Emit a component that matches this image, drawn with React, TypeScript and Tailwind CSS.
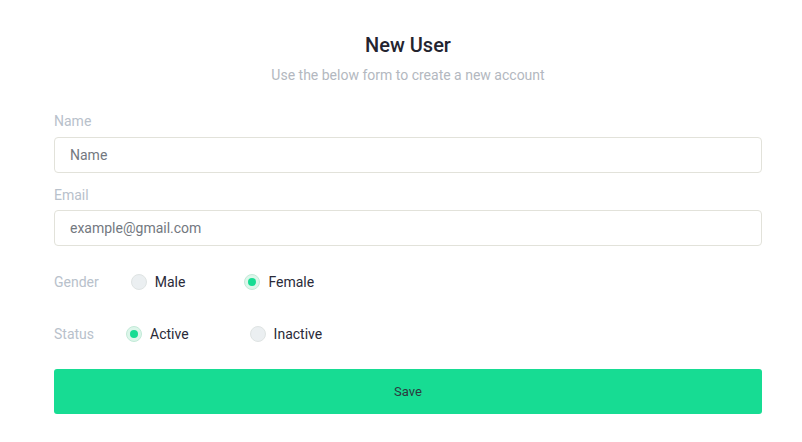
import React from "react";

function Radio({ checked, label }: { checked: boolean; label: string }) {
  return (
    <div className="flex items-center gap-[8px]">
      {checked ? (
        <span className="flex h-[16px] w-[16px] items-center justify-center rounded-full border border-[#c3ead8] bg-[#dcf6ea]">
          <span className="h-[8px] w-[8px] rounded-full bg-[#17dc93]" />
        </span>
      ) : (
        <span className="h-[16px] w-[16px] rounded-full border border-[#dfe4e3] bg-[#ebeff1]" />
      )}
      <span className="text-[14px] leading-[20px] text-[#2a2a38]">{label}</span>
    </div>
  );
}

export default function App() {
  return (
    <div
      className="min-h-[442px] w-full bg-white pl-[54px] pr-[40px] pt-[31px]"
      style={{ fontFamily: "Roboto, 'Liberation Sans', sans-serif" }}
    >
      <h1 className="text-center text-[20px] font-medium leading-[28px] text-[#24242f]">New User</h1>
      <p className="mt-[6px] text-center text-[14px] leading-[20px] text-[#b3b8c0]">
        Use the below form to create a new account
      </p>

      <label className="mt-[26px] block text-[14px] leading-[20px] text-[#b8c1cb]">Name</label>
      <input
        className="mt-[6px] block h-[36px] w-full rounded-[4px] border border-[#e2e2da] px-[15px] text-[14px] text-[#4b5058] placeholder:text-[#737880] outline-none"
        placeholder="Name"
      />

      <label className="mt-[12px] block text-[14px] leading-[20px] text-[#b8c1cb]">Email</label>
      <input
        className="mt-[5px] block h-[36px] w-full rounded-[4px] border border-[#e2e2da] px-[15px] text-[14px] text-[#4b5058] placeholder:text-[#737880] outline-none"
        placeholder="example@gmail.com"
      />

      <div className="mt-[26px] flex items-center">
        <span className="mr-[32px] text-[14px] leading-[20px] text-[#b8c1cb]">Gender</span>
        <div className="flex items-center gap-[59px]">
          <Radio checked={false} label="Male" />
          <Radio checked={true} label="Female" />
        </div>
      </div>

      <div className="mt-[32px] flex items-center">
        <span className="mr-[32px] text-[14px] leading-[20px] text-[#b8c1cb]">Status</span>
        <div className="flex items-center gap-[61px]">
          <Radio checked={true} label="Active" />
          <Radio checked={false} label="Inactive" />
        </div>
      </div>

      <button className="mt-[25px] flex h-[45px] w-full items-center justify-center rounded-[3px] bg-[#17dc93] text-[13px] text-[#2c3a40]">
        Save
      </button>
    </div>
  );
}
